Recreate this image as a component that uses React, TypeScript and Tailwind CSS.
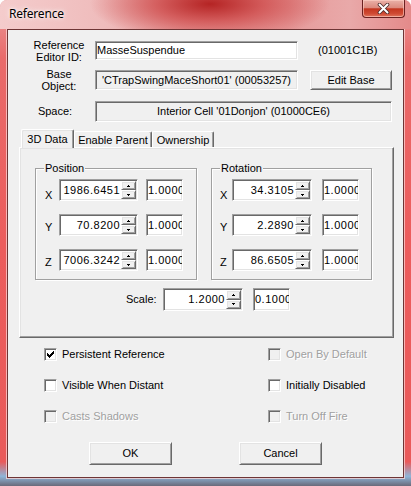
import React from "react";

const SUNKEN =
  "border border-t-[#a0a0a0] border-l-[#a0a0a0] border-b-white border-r-white shadow-[inset_1px_1px_0_#696969,inset_-1px_-1px_0_#e3e3e3] p-[1px]";
const RAISED =
  "border border-t-white border-l-white border-b-[#696969] border-r-[#696969] shadow-[inset_1px_1px_0_#e3e3e3,inset_-1px_-1px_0_#a0a0a0]";

function Arrow({ up }: { up: boolean }) {
  return (
    <svg width="3" height="2" viewBox="0 0 3 2" shapeRendering="crispEdges">
      {up ? (
        <>
          <rect x="1" y="0" width="1" height="1" fill="#000" />
          <rect x="0" y="1" width="3" height="1" fill="#000" />
        </>
      ) : (
        <>
          <rect x="0" y="0" width="3" height="1" fill="#000" />
          <rect x="1" y="1" width="1" height="1" fill="#000" />
        </>
      )}
    </svg>
  );
}

function Spinner() {
  return (
    <div className="flex flex-col w-[15px] h-full">
      <div className={`flex-1 flex items-center justify-center bg-[#f0f0f0] ${RAISED}`}>
        <Arrow up />
      </div>
      <div className={`flex-1 flex items-center justify-center bg-[#f0f0f0] ${RAISED}`}>
        <Arrow up={false} />
      </div>
    </div>
  );
}

function SpinRow({
  letter,
  value,
  second,
  labelClass,
  fieldClass,
  gapClass,
  shiftClass,
}: {
  letter: string;
  value: string;
  second: string;
  labelClass: string;
  fieldClass: string;
  gapClass: string;
  shiftClass: string;
}) {
  return (
    <div className="flex items-center h-[22px]">
      <span className={`${labelClass} ${shiftClass}`}>{letter}</span>
      <div className={`flex h-[22px] bg-white ${fieldClass} ${SUNKEN}`}>
        <div className="flex-1 text-right pr-[1px] leading-[18px] tracking-[0.5px]">{value}</div>
        <Spinner />
      </div>
      <div className={`${gapClass} w-[37px] h-[22px] bg-white overflow-hidden whitespace-nowrap leading-[18px] pl-[1px] tracking-[0.5px] ${SUNKEN}`}>
        {second}
      </div>
    </div>
  );
}

function Group({
  title,
  className,
  children,
}: {
  title: string;
  className: string;
  children: React.ReactNode;
}) {
  return (
    <div
      className={`relative h-[112px] border border-[#a0a0a0] shadow-[inset_1px_1px_0_#fff,1px_1px_0_#fff] ${className}`}
    >
      <span className="absolute -top-[7px] left-[8px] px-[1px] bg-[#f0f0f0] leading-[12px]">
        {title}
      </span>
      {children}
    </div>
  );
}

function Check({
  label,
  checked,
  disabled,
}: {
  label: string;
  checked?: boolean;
  disabled?: boolean;
}) {
  return (
    <div className="flex items-center h-[13px]">
      <div
        className={`w-[13px] h-[13px] flex items-center justify-center ${
          disabled ? "bg-[#f0f0f0]" : "bg-white"
        } ${SUNKEN}`}
      >
        {checked && (
          <svg width="7" height="7" viewBox="0 0 7 7" shapeRendering="crispEdges">
            <path
              d="M6 0h1v1h-1zM5 1h2v1h-2zM0 2h1v1h-1zM4 2h3v1h-3zM0 3h2v1h-2zM3 3h3v1h-3zM0 4h5v1h-5zM1 5h3v1h-3zM2 6h1v1h-1z"
              fill="#000"
            />
          </svg>
        )}
      </div>
      <span
        className={`ml-[5px] leading-[13px] whitespace-nowrap ${
          disabled ? "text-[#a0a0a0] [text-shadow:1px_1px_0_#fff]" : "text-black"
        }`}
      >
        {label}
      </span>
    </div>
  );
}

export default function App() {
  return (
    <div
      className="relative w-[411px] h-[486px] overflow-hidden rounded-t-[7px] bg-[linear-gradient(180deg,#e99a9a_0%,#e96a6a_12%,#ec5c5c_50%,#e95a5a_95%,#8fb5d8_98%,#6a6a7a_100%)] text-black text-[11px] font-['Liberation_Sans',Arial,sans-serif]"
    >
      {/* title bar */}
      <div className="relative h-[29px] flex items-center pl-[9px] bg-[radial-gradient(ellipse_120px_38px_at_210px_4px,#b52424_0%,rgba(205,70,70,0.75)_45%,rgba(230,140,140,0)_100%),linear-gradient(90deg,#f4cccc_0%,#efbcbc_25%,#e9a3a3_45%,#e69a9a_70%,#e9a9a9_85%,#e48a8a_100%)]">
        <span className="text-[12px] leading-[14px] -mt-[1px] font-['Noto_Sans','Liberation_Sans',sans-serif] tracking-[-0.2px] [text-shadow:0_0_6px_#fff,0_0_3px_#fff]">
          Reference
        </span>
        <div className="absolute top-0 right-[6px] w-[43px] h-[18px] rounded-b-[4px] border border-t-0 border-[#6a2020] bg-[linear-gradient(180deg,#eab1a8_0%,#dc8a7e_45%,#c3351f_52%,#cf4a33_80%,#e0755f_100%)] shadow-[inset_0_0_0_1px_rgba(255,210,200,0.6)] flex items-center justify-center">
          <svg width="13" height="11" viewBox="0 0 13 11">
            <path d="M2.5 1.5 L10.5 9.5 M10.5 1.5 L2.5 9.5" stroke="#4a2a2a" strokeWidth="3.6" strokeLinecap="round" />
            <path d="M2.5 1.5 L10.5 9.5 M10.5 1.5 L2.5 9.5" stroke="#fff" strokeWidth="2" strokeLinecap="round" />
          </svg>
        </div>
      </div>

      {/* client */}
      <div className="ml-[7px] w-[397px] h-[449px] border border-[#6e3535] bg-[#f0f0f0] shadow-[0_0_0_1px_rgba(255,220,220,0.7)]">
        {/* row 1 */}
        <div className="flex items-center h-[19px] mt-[11px]">
          <div className="w-[62px] ml-[20px] text-center leading-[12px]">
            Reference
            <br />
            Editor ID:
          </div>
          <div className={`ml-[5px] w-[203px] h-[19px] bg-white leading-[15px] pl-[1px] ${SUNKEN}`}>
            MasseSuspendue
          </div>
          <div className="ml-[20px]">(01001C1B)</div>
        </div>

        {/* row 2 */}
        <div className="flex items-center h-[20px] mt-[10px]">
          <div className="w-[62px] ml-[20px] text-center leading-[12px]">
            Base
            <br />
            Object:
          </div>
          <div className={`ml-[5px] w-[203px] h-[20px] bg-[#f0f0f0] text-center leading-[16px] whitespace-nowrap ${SUNKEN}`}>
            'CTrapSwingMaceShort01' (00053257)
          </div>
          <div className={`ml-[12px] w-[82px] h-[20px] bg-[#f0f0f0] text-center leading-[18px] ${RAISED}`}>
            Edit Base
          </div>
        </div>

        {/* row 3 */}
        <div className="flex items-center h-[21px] mt-[11px]">
          <div className="w-[62px] ml-[20px] pr-[8px] text-center">Space:</div>
          <div className={`ml-[5px] w-[297px] h-[21px] bg-[#f0f0f0] text-center leading-[17px] whitespace-nowrap ${SUNKEN}`}>
            Interior Cell '01Donjon' (01000CE6)
          </div>
        </div>

        {/* tabs */}
        <div className="flex items-end h-[18px] mt-[7px] ml-[13px] relative z-10">
          <div className="h-[19px] -mb-[1px] w-[53px] bg-[#f0f0f0] border-t border-l border-white border-r border-r-[#696969] shadow-[inset_-1px_0_0_#a0a0a0,inset_1px_1px_0_#e3e3e3] rounded-t-[2px] text-center leading-[18px]">
            3D Data
          </div>
          <div className="h-[16px] w-[78px] bg-[#f0f0f0] border-t border-l border-white border-r border-r-[#696969] shadow-[inset_-1px_0_0_#a0a0a0] rounded-t-[2px] text-center leading-[16px]">
            Enable Parent
          </div>
          <div className="h-[16px] w-[62px] bg-[#f0f0f0] border-t border-l border-white border-r border-r-[#696969] shadow-[inset_-1px_0_0_#a0a0a0] rounded-t-[2px] text-center leading-[16px]">
            Ownership
          </div>
        </div>

        {/* tab panel */}
        <div className="ml-[11px] w-[375px] h-[191px] border border-t-white border-l-white border-b-[#696969] border-r-[#696969] shadow-[inset_-1px_-1px_0_#a0a0a0,inset_1px_1px_0_#e3e3e3]">
          <div className="flex pt-[20px] pl-[15px]">
            <Group title="Position" className="w-[162px] pt-[10px]">
              <div className="flex flex-col gap-[13px]">
                <SpinRow letter="X" value="1986.6451" second="1.0000" labelClass="w-[23px] pl-[9px]" fieldClass="w-[79px]" gapClass="ml-[8px]" shiftClass="translate-y-[5px]" />
                <SpinRow letter="Y" value="70.8200" second="1.0000" labelClass="w-[23px] pl-[9px]" fieldClass="w-[79px]" gapClass="ml-[8px]" shiftClass="translate-y-[2px]" />
                <SpinRow letter="Z" value="7006.3242" second="1.0000" labelClass="w-[23px] pl-[9px]" fieldClass="w-[79px]" gapClass="ml-[8px]" shiftClass="translate-y-[2px]" />
              </div>
            </Group>
            <Group title="Rotation" className="ml-[14px] w-[161px] pt-[10px]">
              <div className="flex flex-col gap-[13px]">
                <SpinRow letter="X" value="34.3105" second="1.0000" labelClass="w-[20px] pl-[8px]" fieldClass="w-[80px]" gapClass="ml-[10px]" shiftClass="translate-y-[5px]" />
                <SpinRow letter="Y" value="2.2890" second="1.0000" labelClass="w-[20px] pl-[8px]" fieldClass="w-[80px]" gapClass="ml-[10px]" shiftClass="translate-y-[2px]" />
                <SpinRow letter="Z" value="86.6505" second="1.0000" labelClass="w-[20px] pl-[8px]" fieldClass="w-[80px]" gapClass="ml-[10px]" shiftClass="translate-y-[2px]" />
              </div>
            </Group>
          </div>
          <div className="flex items-center h-[23px] mt-[8px] ml-[106px]">
            <span className="w-[37px]">Scale:</span>
            <div className={`flex h-[23px] w-[80px] bg-white ${SUNKEN}`}>
              <div className="flex-1 text-right pr-[1px] leading-[19px] tracking-[0.5px]">1.2000</div>
              <Spinner />
            </div>
            <div className={`ml-[10px] w-[37px] h-[23px] bg-white overflow-hidden whitespace-nowrap leading-[19px] pl-[1px] tracking-[0.5px] ${SUNKEN}`}>
              0.1000
            </div>
          </div>
        </div>

        {/* checkboxes */}
        <div className="flex mt-[10px] ml-[36px]">
          <div className="w-[224px] flex flex-col gap-[18px]">
            <Check label="Persistent Reference" checked />
            <Check label="Visible When Distant" />
            <Check label="Casts Shadows" disabled />
          </div>
          <div className="flex flex-col gap-[18px]">
            <Check label="Open By Default" disabled />
            <Check label="Initially Disabled" />
            <Check label="Turn Off Fire" disabled />
          </div>
        </div>

        {/* buttons */}
        <div className="flex mt-[19px] ml-[81px]">
          <div className={`w-[83px] h-[23px] bg-[#f0f0f0] text-center leading-[21px] ${RAISED}`}>OK</div>
          <div className={`ml-[67px] w-[83px] h-[23px] bg-[#f0f0f0] text-center leading-[21px] ${RAISED}`}>Cancel</div>
        </div>
      </div>
    </div>
  );
}
